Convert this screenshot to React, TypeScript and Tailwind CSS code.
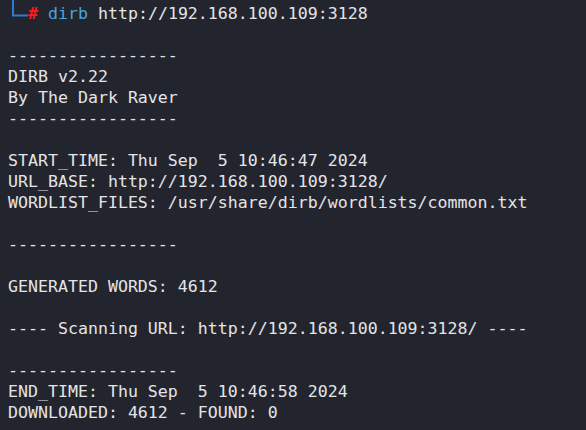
const lines = [
  "",
  "-----------------",
  "DIRB v2.22",
  "By The Dark Raver",
  "-----------------",
  "",
  "START_TIME: Thu Sep  5 10:46:47 2024",
  "URL_BASE: http://192.168.100.109:3128/",
  "WORDLIST_FILES: /usr/share/dirb/wordlists/common.txt",
  "",
  "-----------------",
  "",
  "GENERATED WORDS: 4612",
  "",
  "---- Scanning URL: http://192.168.100.109:3128/ ----",
  "",
  "-----------------",
  "END_TIME: Thu Sep  5 10:46:58 2024",
  "DOWNLOADED: 4612 - FOUND: 0",
];

const App = () => {
  return (
    <div className="w-[586px] h-[430px] overflow-hidden bg-[#23252e] text-[#e3e4e6] font-['DejaVu_Sans_Mono',monospace] text-[16.6px] leading-[21px] pt-[3px] pl-[8px] whitespace-pre">
      <div className="flex items-start h-[21px]">
        <svg width="20" height="21" overflow="visible" className="shrink-0">
          <path d="M5 -4 V12.5 H20" fill="none" stroke="#2f7ad6" strokeWidth="2" />
        </svg>
        <span className="text-[#ff1a1a] font-bold">#</span>
        <span> </span>
        <span className="text-[#4aa3da]">dirb</span>
        <span> http://192.168.100.109:3128</span>
      </div>
      {lines.map((line, i) => (
        <div key={i} className="h-[21px]">{line}</div>
      ))}
    </div>
  );
};

export default App;
